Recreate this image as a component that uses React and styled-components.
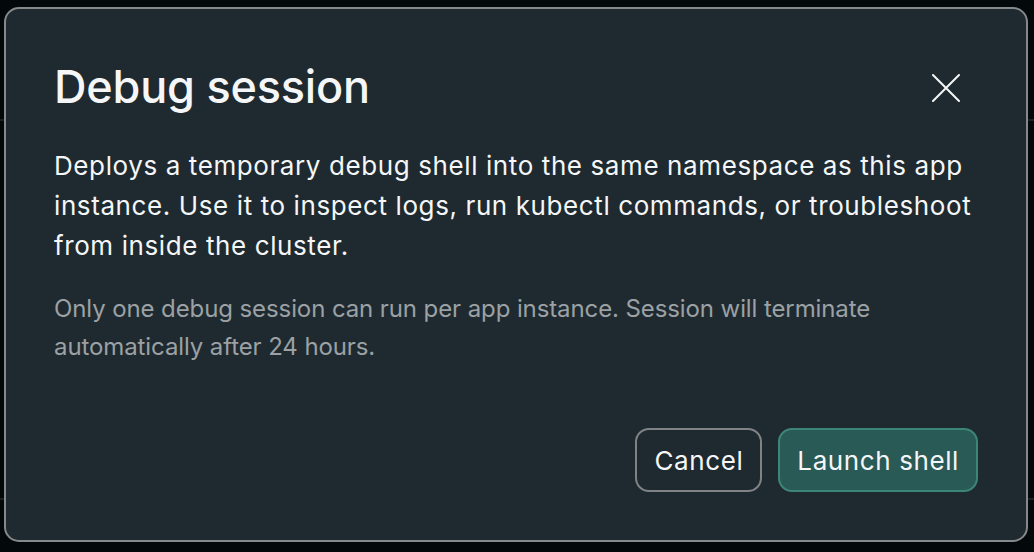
import styled, { createGlobalStyle } from "styled-components";

const GlobalStyle = createGlobalStyle`
    html, body {
        margin: 0;
        padding: 0;
        background: #03080a;
        font-family: Inter, "Noto Sans", sans-serif;
        -webkit-font-smoothing: antialiased;
    }
    * { box-sizing: border-box; }
`;

const StyledPage = styled.div`
    width: 1034px;
    height: 552px;
    position: relative;
    overflow: hidden;
    display: flex;
    flex-direction: column;
    justify-content: space-between;

    >header{
        height: 121px;
        border-bottom: 2px solid #1d2123;
    }
    >footer{
        height: 54px;
        border-top: 2px solid #1d2123;
    }
`;

const Overlay = styled.div`
    position: absolute;
    inset: 0;
    padding: 7px 6px 10px 4px;
    display: flex;
`;

const Dialog = styled.section`
    flex: 1;
    background: #1f2a30;
    border: 2px solid #85898b;
    border-radius: 15px;
    padding: 47px 48px 48px 48px;
    display: flex;
    flex-direction: column;
    color: #f4f6f7;
`;

const DialogHeader = styled.div`
    display: flex;
    align-items: center;
    justify-content: space-between;
    margin-bottom: 28px;

    >h2{
        margin: 0;
        font-size: 45px;
        font-weight: 500;
        letter-spacing: -0.2px;
        line-height: 62px;
    }
`;

const CloseButton = styled.button`
    width: 40px;
    height: 40px;
    margin-right: 12px;
    margin-top: 2px;
    background: none;
    border: none;
    padding: 0;
    display: flex;
    align-items: center;
    justify-content: center;
    color: #f4f6f7;
    cursor: pointer;
`;

const Text = styled.p`
    margin: 0;
    font-size: ${(p) => (p.$muted ? "24px" : "26px")};
    line-height: ${(p) => (p.$muted ? "38px" : "40px")};
    letter-spacing: ${(p) => (p.$muted ? "-0.1px" : "0.6px")};
    color: ${(p) => (p.$muted ? "#9ba1a4" : "#f4f6f7")};
    margin-bottom: ${(p) => (p.$muted ? "0" : "24px")};
`;

const Actions = styled.div`
    margin-top: auto;
    display: flex;
    justify-content: flex-end;
    gap: 16px;
`;

const Button = styled.button`
    height: 64px;
    padding: 0 17px;
    border-radius: 14px;
    font-family: inherit;
    font-size: 26px;
    letter-spacing: 0.6px;
    color: #f4f6f7;
    cursor: pointer;
    border: 2px solid ${(p) => (p.$primary ? "#3e8579" : "#7f8386")};
    background: ${(p) => (p.$primary ? "#2a5a55" : "transparent")};
`;

const App = () => {
    return (
        <>
            <GlobalStyle />
            <StyledPage>
                <header></header>
                <footer></footer>
                <Overlay>
                    <Dialog role="dialog" aria-labelledby="debug-title">
                        <DialogHeader>
                            <h2 id="debug-title">Debug session</h2>
                            <CloseButton aria-label="Close">
                                <svg width="28" height="28" viewBox="0 0 28 28" fill="none" stroke="currentColor" strokeWidth="2" strokeLinecap="round">
                                    <path d="M1 1 L27 27 M27 1 L1 27" />
                                </svg>
                            </CloseButton>
                        </DialogHeader>
                        <Text>
                            Deploys a temporary debug shell into the same namespace as this app
                            instance. Use it to inspect logs, run kubectl commands, or troubleshoot
                            from inside the cluster.
                        </Text>
                        <Text $muted>
                            Only one debug session can run per app instance. Session will terminate
                            automatically after 24 hours.
                        </Text>
                        <Actions>
                            <Button>Cancel</Button>
                            <Button $primary>Launch shell</Button>
                        </Actions>
                    </Dialog>
                </Overlay>
            </StyledPage>
        </>
    );
};

export default App;
